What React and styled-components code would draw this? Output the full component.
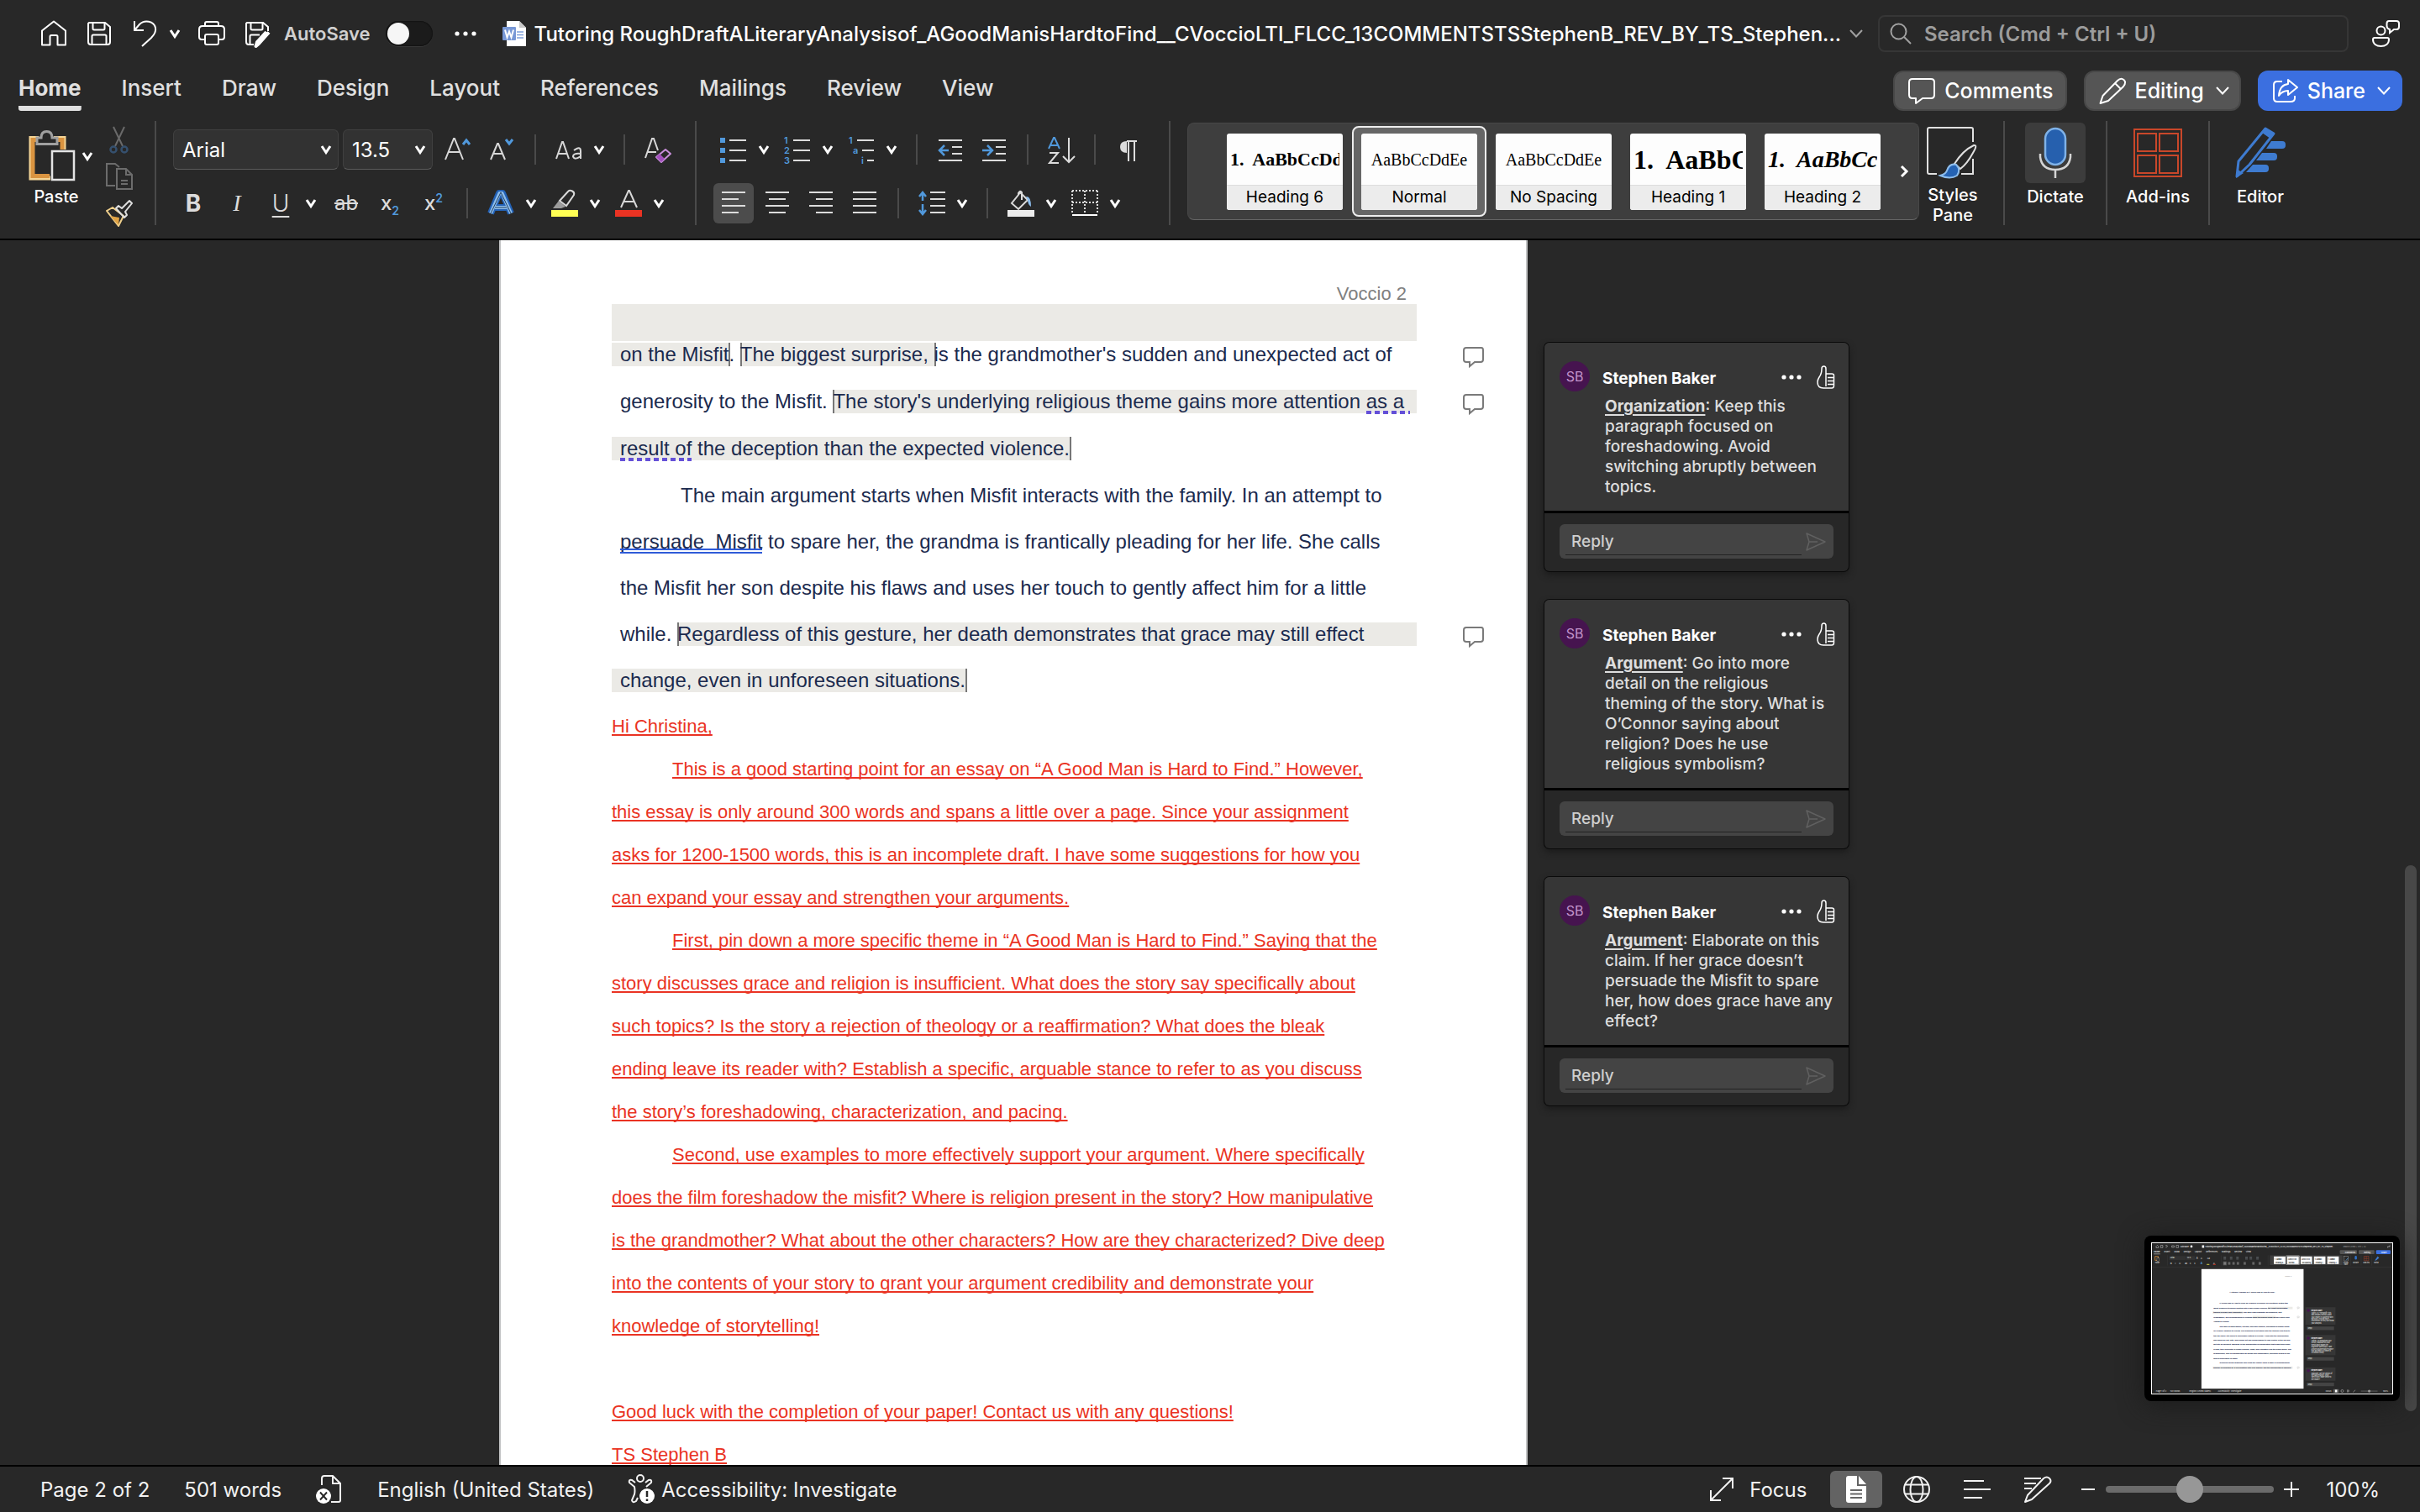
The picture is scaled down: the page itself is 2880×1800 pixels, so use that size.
import React from "react";
import styled, { createGlobalStyle, css } from "styled-components";

const UI = `Inter, "Liberation Sans", sans-serif`;
const ARIAL = `"Liberation Sans", Arial, sans-serif`;
const TIMES = `"Liberation Serif", "Times New Roman", serif`;

const GlobalStyle = createGlobalStyle`
  *, ::before, ::after { box-sizing: border-box; }
  body { margin: 0; background: #282828; font-family: ${UI}; color: #e0e0e0; }
  button, input, select { font: inherit; color: inherit; background: none; border: 0; padding: 0; margin: 0; outline: 0; }
  svg { display: block; flex: none; overflow: visible; }
`;

/* ---------- icons ---------- */

const Svg = ({ w, h, sw = 2, children, ...rest }) => (
  <svg width={w} height={h} viewBox={`0 0 ${w} ${h}`} fill="none" stroke="currentColor" strokeWidth={sw} aria-hidden="true" {...rest}>
    {children}
  </svg>
);

const BLUE = "#5199dc";
const Chevron = () => <Svg w={12} h={12} sw={3}><path d="M1 2 6 9.5 11 2" /></Svg>;
const ThinChevron = ({ color = "currentColor" }) => <Svg w={16} h={12} sw={2} stroke={color}><path d="M1 2 8 9.5 15 2" /></Svg>;

const HomeIcon = () => <Svg w={32} h={32}><path d="M2 12.5 16 1.5 30 12.5V29.500H20.500V19.500Q20.500 18 19 18H13Q11.500 18 11.500 19.500V29.500H2Z" strokeLinejoin="round" /></Svg>;
const SaveIcon = () => <Svg w={32} h={32}><path d="M4 3H23L29 8V26Q29 29 26 29H6Q3 29 3 26V4Z" strokeLinejoin="round" /><path d="M8.500 3V10Q8.500 11.500 10 11.500H21Q22.500 11.500 22.500 10V3M7.500 29V19Q7.500 17.500 9 17.500H23Q24.500 17.500 24.500 19V29" /></Svg>;
const UndoIcon = () => <Svg w={32} h={32}><path d="M4 1V12H15" /><path d="M4.500 11.500 10 5C16 -1 27 1 29 9C30 14 27 18 24 21L13 31" /></Svg>;
const PrintIcon = () => <Svg w={32} h={32}><path d="M8 7V4Q8 2 10 2H22Q24 2 24 4V7M8 23H4Q1 23 1 20V11Q1 7 5 7H27Q31 7 31 11V20Q31 23 28 23H24" /><rect x="8" y="17" width="16" height="12" rx="2" /></Svg>;
const SaveEditIcon = () => <Svg w={32} h={32}><path d="M29 13V8L23 3H4L3 4V26Q3 29 6 29H12" /><path d="M8.500 3V10Q8.500 11.500 10 11.500H21Q22.500 11.500 22.500 10V3M7.500 29V19Q7.500 17.500 9 17.500H19" /><path d="M30 14.500 18 28 14.500 31 16 26 27 14" strokeWidth="4" fill="currentColor" strokeLinejoin="round" /></Svg>;
const Dots = ({ w = 26 }) => <Svg w={w} h={8} stroke="none" fill="currentColor"><circle cx="3" cy="4" r="2.600" /><circle cx={w / 2} cy="4" r="2.600" /><circle cx={w - 3} cy="4" r="2.600" /></Svg>;
const WordDocIcon = () => (
  <Svg w={28} h={30} stroke="none">
    <path d="M5 0H20L28 8V30H5Z" fill="#fff" /><path d="M20 0 28 8H20Z" fill="#c9c9c9" />
    <path d="M17 13H25M17 16.500H25M17 20H25" stroke="#7fa0dc" strokeWidth="1.500" />
    <rect x="0" y="7" width="16" height="16" rx="1" fill="#7898d6" />
    <path d="M3 10.500 5.500 19.500 8 12.500 10.500 19.500 13 10.500" stroke="#fff" strokeWidth="2" />
  </Svg>
);
const SearchIcon = () => <Svg w={26} h={26}><circle cx="10.500" cy="10.500" r="9" /><path d="M17 17 25 25" /></Svg>;
const PresenceIcon = () => <Svg w={34} h={34}><circle cx="10.500" cy="13.500" r="5" /><path d="M3 22H18Q20 22 20 24C20 29 16 32 10.500 32S1 29 1 24Q1 22 3 22Z" /><path d="M20 2H29Q32 2 32 5V9Q32 12 29 12H26L21 16V12Q17.500 11 17.500 8V5Q17.500 2 20 2Z" /></Svg>;
const BubbleIcon = () => <Svg w={32} h={32}><path d="M5 2H27Q31 2 31 6V21Q31 25 27 25H17L9 31V25H5Q1 25 1 21V6Q1 2 5 2Z" strokeLinejoin="round" /></Svg>;
const PencilIcon = () => <Svg w={32} h={32}><path d="M22 4Q26 0 29.500 3T29 11L11 28 1.500 31 4.500 22ZM19 7 26 14" strokeLinejoin="round" /></Svg>;
const ShareIcon = () => <Svg w={30} h={30}><path d="M11 4H5Q1 4 1 8V24Q1 28 5 28H21Q26 28 26 24V21" /><path d="M18 2 29 11 18 20V15Q11 15 7 21Q8 8 18 7Z" strokeLinejoin="round" /></Svg>;

const PasteIcon = () => (
  <Svg w={56} h={64}>
    <path d="M12 10.500H3V58H26M30 10.500H42V24" stroke="#f5d596" strokeWidth="5" /><path d="M10 12.500H5V55.500H25M34 12.500H40V24" stroke="#da9440" strokeWidth="5" />
    <path d="M10 17.500V10H15Q15 2.500 21.500 2.500T28 10H34V17.500Z" fill="#282828" stroke="#a0a0a0" strokeWidth="3" />
    <rect x="28" y="26" width="26" height="34" fill="#282828" stroke="#e4e4e4" strokeWidth="2.500" />
  </Svg>
);
const CutIcon = () => <Svg w={32} h={32}><path d="M9 1 20 24M22 1 11 24" stroke="#6a6a6a" /><circle cx="9" cy="28" r="3.500" stroke="#35506e" strokeWidth="2.500" /><circle cx="22" cy="28" r="3.500" stroke="#35506e" strokeWidth="2.500" /></Svg>;
const CopyIcon = () => <Svg w={32} h={32} stroke="#6c6c6c"><path d="M11 27H1V1H11L16 5M13 7H24L31 14V31H13ZM24 7V14H31M18 21H26M18 25H26" /></Svg>;
const BrushIcon = () => <Svg w={32} h={32}><path d="M1 13 8 9 21 19 15 31Z" stroke="#f0d08c" strokeLinejoin="round" /><path d="M5 19 16 21 15 30Z" fill="#dfa244" stroke="none" /><path d="M12 10 15 7 19 10 28 1 31 4 23 14 25 18 22 21Z" stroke="#dedede" strokeLinejoin="round" /></Svg>;

const GrowIcon = () => <Svg w={32} h={32}><path d="M1 28 11 3H12L22 28M5 19H18" stroke="#d8d8d8" /><path d="M22 10 26 5 30 10" stroke={BLUE} strokeWidth="3" /></Svg>;
const ShrinkIcon = () => <Svg w={32} h={32}><path d="M3 28 11 9H12L20 28M6 21H17" stroke="#d8d8d8" /><path d="M21 4 25 9 29 4" stroke={BLUE} strokeWidth="3" /></Svg>;
const CaseIcon = () => <Svg w={32} h={32} stroke="#d8d8d8"><path d="M1 27 8 7H9L16 27M4 21H13M22 17Q30 11 30 18V27M30 21Q21 20 21 24.500Q23 29 30 24" /></Svg>;
const ClearIcon = () => <Svg w={32} h={32}><path d="M1 26 9 3H11L16 17M4 19H14" stroke="#d8d8d8" /><path d="M14 25 25 16 31 21 20 31Z" stroke="#c98fdb" strokeLinejoin="round" /><path d="M14 25 18 21 24 27 20 31Z" fill="#a24fbd" stroke="none" /></Svg>;
const EffectsIcon = () => <Svg w={32} h={32} strokeLinejoin="round"><path d="M4 28 14 4H18L28 28M9 21H23" stroke="#2361b5" strokeWidth="8" /><path d="M4 28 14.500 4H17.500L28 28M9 21H23" stroke="#8dbdec" strokeWidth="4" /><path d="M4 28 16 3 28 28M9 21H23" stroke="#24405f" strokeWidth="1" /></Svg>;
const MarkerIcon = () => <Svg w={32} h={32}><path d="M10 13 20 2Q22 0 25 1.500T27 6L18 19Z" stroke="#d8d8d8" /><path d="M9 13 17 20 12 22H2Z" fill="#9c9c9c" stroke="none" /><rect y="24" width="32" height="8" fill="#ffff54" stroke="none" /></Svg>;
const ColorIcon = () => <Svg w={32} h={32}><path d="M7 21 16 1H17L26 21M11 14H22" stroke="#d8d8d8" /><rect y="24" width="32" height="8" fill="#ea3323" stroke="none" /></Svg>;

const BulletsIcon = () => <Svg w={32} h={32}><path d="M11 5H31M11 17H31M11 29H31" stroke="#dcdcdc" /><path d="M0 2H6V8H0ZM0 14H6V20H0ZM0 26H6V32H0Z" fill={BLUE} stroke="none" /></Svg>;
const Digit = styled.text`font: 600 11px ${UI}; fill: ${BLUE}; stroke: none;`;
const NumbersIcon = () => <Svg w={32} h={32}><path d="M11 5H31M11 17H31M11 29H31" stroke="#dcdcdc" /><Digit x="0" y="9">1</Digit><Digit x="0" y="21">2</Digit><Digit x="0" y="33">3</Digit></Svg>;
const LevelsIcon = () => <Svg w={32} h={32}><path d="M11 5H31M17 17H31M23 29H31" stroke="#dcdcdc" /><Digit x="1" y="9">1</Digit><Digit x="6" y="21">a</Digit><Digit x="16" y="33">i</Digit></Svg>;
const DentIcon = ({ flip }) => <Svg w={32} h={32}><path d="M2 5H30M18 13H30M18 21H30M2 29H30" stroke="#dcdcdc" /><path d={flip ? "M2 17H13M8 11 14 17 8 23" : "M14 17H4M9 11 3 17 9 23"} stroke={BLUE} strokeWidth="2.500" /></Svg>;
const SortIcon = () => <Svg w={32} h={32}><path d="M1 15 7 2H8L14 15M3 11H12" stroke={BLUE} /><path d="M2 20H12L2 32H13M25 2V31M18 24 25 31 32 24" stroke="#dcdcdc" /></Svg>;
const PilcrowIcon = () => <Svg w={32} h={32}><path d="M26 6H14Q6 6 6 13T14 20V6" fill="#dcdcdc" stroke="none" /><path d="M26 6H14M16 6V30M23 6V30" stroke="#dcdcdc" /></Svg>;
const LINES = {
  left: "M2 3H30M2 11H22M2 19H30M2 27H22", center: "M2 3H30M6 11H26M2 19H30M6 27H26",
  right: "M2 3H30M10 11H30M2 19H30M10 27H30", justify: "M2 3H30M2 11H30M2 19H30M2 27H30",
};
const AlignIcon = ({ kind }) => <Svg w={32} h={32} stroke="#dcdcdc"><path d={LINES[kind]} /></Svg>;
const SpacingIcon = () => <Svg w={32} h={32}><path d="M14 3H32M14 11H32M14 19H32M14 27H32" stroke="#dcdcdc" /><path d="M5 13V3M1 8 5 3 9 8M5 17V29M1 24 5 29 9 24" stroke={BLUE} strokeWidth="2.500" /></Svg>;
const BucketIcon = () => <Svg w={32} h={32}><path d="M13 6 5 16 13 23 24 12 15 3ZM13 6V4Q15 0 17 3V12" stroke="#dcdcdc" /><path d="M22 8Q28 7 28 20Q24 17 24 12Z" fill="#8dbdec" stroke="none" /><rect y="24" width="32" height="8" fill="#ededed" stroke="none" /></Svg>;
const BordersIcon = () => <Svg w={32} h={32} stroke="#dcdcdc"><path d="M1 1H31M1 15H31M1 1V28M16 1V28M31 1V28" strokeDasharray="2 2" /><path d="M1 30H31" stroke="#fff" /></Svg>;

const StylesPaneIcon = () => <Svg w={64} h={64}><path d="M13 58H4Q2 58 2 56V5Q2 3 4 3H54Q56 3 56 5V20M56 40V58H42" stroke="#e0e0e0" /><path d="M34 46Q44 30 57 24Q62 23 56 33Q49 46 41 52Z" stroke="#e0e0e0" fill="#282828" /><path d="M17 60Q24 58 25 54Q28 45 36 47Q42 53 37 60Q29 65 17 60Z" fill="#2563b4" stroke="#8dbdec" /></Svg>;
const MicIcon = () => <Svg w={40} h={62}><rect x="8" y="2" width="24" height="43" rx="12" fill="#2660ae" stroke="#7fb2e8" strokeWidth="2.500" /><path d="M2 32V36Q4 51 20 51T38 36V32M20 51V61" stroke="#d4d4d4" strokeWidth="2.500" /></Svg>;
const AddInsIcon = () => <Svg w={58} h={60} stroke="#c9472a"><rect x="1" y="2" width="56" height="56" /><path d="M5 7H27V28H5ZM31 7H53V28H31ZM5 33H27V54H5ZM31 33H53V54H31Z" /></Svg>;
const EditorIcon = () => (
  <Svg w={62} h={64} stroke="#3e7bd0">
    <path d="M38 27H57Q61 27 61 23V22Q61 18 57 18H44ZM26 41H47Q51 41 51 37V36Q51 32 47 32H33ZM14 55H37Q41 55 41 51V50Q41 46 37 46H22Z" fill="#3e7bd0" stroke="none" />
    <path d="M37 3 47 9 18 46 3 60 5 42Z" fill="#282828" strokeWidth="3" strokeLinejoin="round" /><path d="M37 2 48 9 43 15 33 8ZM2 62 4 52 11 56Z" fill="#3e7bd0" stroke="none" />
  </Svg>
);

const NoteIcon = () => <Svg w={26} h={26} sw={2} stroke="#7a7a7a"><path d="M4 2H22Q24 2 24 5V16Q24 19 21 19H14L8 24V19H4Q1 19 1 16V5Q1 2 4 2Z" /></Svg>;
const ThumbIcon = () => <Svg w={22} h={28}><path d="M11 10V4Q11 1 8.500 1T6 4Q6 10 3 14Q1 17 1 20Q1 27 8 27H18Q20.500 27 20.500 24V12Q20.500 10 18 10H11V25" strokeWidth="1.500" /><path d="M13 14.500H21M13 18.500H21M13 22.500H21" strokeWidth="1.500" /></Svg>;
const SendIcon = () => <Svg w={26} h={24} sw={1.500} stroke="#606060"><path d="M2 2 24 12 2 22 5 12ZM5 12H15" strokeLinejoin="round" /></Svg>;

const ProofIcon = () => <Svg w={32} h={36}><path d="M7 13V5Q7 2 10 2H20L29 11V31Q29 33 27 33H18M20 2V11H29" /><circle cx="9" cy="26" r="9" fill="#fff" stroke="none" /><path d="M5 21.500 13 30.500M13 21.500 5 30.500" stroke="#282828" /></Svg>;
const AccessIcon = () => <Svg w={32} h={36}><circle cx="14" cy="5" r="4" /><path d="M8 10 4 7Q0 6 1 10L7 15Q8 20 7 24L4 31Q5 35 9 32L11 28M20 10 24 7Q28 6 27 10L21 15" /><circle cx="22" cy="26" r="9" fill="#fff" stroke="none" /><path d="M22 20V27M22 29.500V32" stroke="#282828" strokeWidth="2.500" /></Svg>;
const FocusIcon = () => <Svg w={30} h={30}><path d="M2 28 28 2M16 2H28V14M14 28H2V16" /></Svg>;
const PageIcon = () => <Svg w={24} h={32}><path d="M2 0H13V12H24V29Q24 32 21 32H3Q0 32 0 29V3Q0 0 3 0ZM15 0 24 10H15Z" fill="#fff" stroke="none" /><path d="M5 17H19M5 21.500H19M5 26H19" stroke="#666" /></Svg>;
const GlobeIcon = () => <Svg w={32} h={32}><circle cx="16" cy="16" r="15" /><ellipse cx="16" cy="16" rx="7.500" ry="15" /><path d="M2 10.500H30M2 21.500H30" /></Svg>;
const OutlineIcon = () => <Svg w={32} h={32}><path d="M0 6H24M0 16H32M0 26H22" /></Svg>;
const DraftIcon = () => <Svg w={32} h={32}><path d="M0 3H20M0 9H14M0 15H9" /><path d="M23 3Q27 0 30 3T30 9L9 28 1 31 4 23Z" strokeLinejoin="round" /></Svg>;

/* ---------- shell ---------- */

const Window = styled.div`
  position: relative;
  display: grid;
  grid-template-columns: minmax(0, 1fr);
  grid-template-rows: auto minmax(0, 1fr) auto;
  height: 100vh;
  overflow: hidden;
  background: #282828;
`;

const TopBar = styled.header`border-bottom: 2px solid #000;`;

const TitleRow = styled.div`
  display: flex;
  align-items: center;
  height: 80px;
  padding: 0 23px 0 48px;
  color: #fff;
`;

const Quick = styled.div`display: flex; align-items: center; gap: 22px;`;
const Pair = styled.div`display: flex; align-items: center; gap: 14px;`;
const Bare = styled.button`display: grid; place-items: center; flex: none;`;

const AutoSave = styled.label`
  display: flex;
  align-items: center;
  gap: 18px;
  margin: 0 26px 0 16px;
  font-size: 22px;
  font-weight: 600;
  color: #d0d0d0;
`;

const Toggle = styled.input`
  appearance: none;
  width: 56px;
  height: 30px;
  border-radius: 15px;
  background: #1b1b1b;
  box-shadow: inset 0 0 2px #000, 0 1px 0 #383838;
  &::before { content: ""; display: block; width: 26px; height: 26px; margin: 2px; border-radius: 50%; background: #f6f6f6; }
`;

const FileName = styled.button`
  display: flex;
  align-items: center;
  gap: 10px;
  min-width: 0;
  margin: 0 14px 0 31px;
  font-size: 24px;
  font-weight: 500;
  white-space: nowrap;
`;
const FileText = styled.span`overflow: hidden;`;

const SearchBox = styled.label`
  display: flex;
  align-items: center;
  gap: 15px;
  flex: none;
  width: 560px;
  height: 44px;
  margin: 0 28px 0 auto;
  padding: 0 12px;
  border: 2px solid #363636;
  border-radius: 8px;
  color: #a0a0a0;
  input { flex: 1; min-width: 0; font-size: 24px; font-weight: 600; }
  input::placeholder { color: #9c9c9c; opacity: 1; }
`;

const TabRow = styled.div`display: flex; align-items: center; height: 56px; padding: 0 21px 0 22px;`;
const Tabs = styled.nav`display: flex; gap: 48px; flex: 1;`;
const Tab = styled.button`
  height: 48px;
  padding-bottom: 6px;
  font-size: 26px;
  line-height: 42px;
  font-weight: ${(p) => (p.$on ? 700 : 500)};
  ${(p) => p.$on && css`background: linear-gradient(#e0e0e0, #e0e0e0) bottom / 100% 6px no-repeat; border-radius: 3px;`}
`;

const Actions = styled.div`display: flex; gap: 20px;`;
const Pill = styled.button`
  display: flex;
  align-items: center;
  gap: 11px;
  height: 48px;
  padding: 0 ${(p) => (p.$menu ? 12 : 14)}px 0 16px;
  border-radius: 12px;
  border: 2px solid ${(p) => (p.$primary ? "#3b6fe0" : "#484848")};
  background: ${(p) => (p.$primary ? "#3b6fe0" : "#555")};
  color: #fff;
  font-size: 25px;
  font-weight: 500;
  svg:last-child:not(:first-child) { margin-left: 3px; }
`;

/* ---------- ribbon ---------- */

const Ribbon = styled.div`
  display: flex;
  height: 148px;
  padding: 8px 0 16px 34px;
`;
const Divider = styled.div`
  flex: none;
  width: 2px;
  background: #4a4a4a;
  margin: 0 ${(p) => p.$after ?? 24}px 0 ${(p) => p.$before ?? 24}px;
`;
const Rows = styled.div`display: flex; flex-direction: column; gap: 16px; padding-top: 10px;`;
const Row = styled.div`display: flex; align-items: center; height: 48px; gap: 20px; padding-left: ${(p) => (p.$inset ? 8 : 0)}px;`;
const Cluster = styled.div`display: flex; align-items: center; gap: 18px;`;
const Fields = styled.div`display: flex; gap: 5px; margin-right: -6px;`;
const Rule = styled.div`width: 2px; height: 36px; margin: 0 3px; background: #4a4a4a;`;

const Tool = styled.button`
  display: grid;
  place-items: center;
  width: 48px;
  height: 48px;
  margin: 0 -8px;
  border-radius: 6px;
  color: #dcdcdc;
  background: ${(p) => (p.$on ? "#4c4c4c" : "transparent")};
`;
const SplitBox = styled.div`display: flex; align-items: center; gap: 14px; color: #fff;`;
const Split = ({ label, children }) => (
  <SplitBox><Tool aria-label={label}>{children}</Tool><Bare aria-label={`${label} options`}><Chevron /></Bare></SplitBox>
);

const Glyph = styled.span`
  display: inline-block;
  font-size: 28px;
  line-height: 32px;
  font-weight: ${(p) => (p.$bold ? 700 : 400)};
  font-style: ${(p) => (p.$italic ? "italic" : "normal")};
  font-family: ${(p) => (p.$italic ? TIMES : UI)};
  ${(p) => p.$under && css`font-weight: 300; text-decoration: underline; text-decoration-thickness: 2px; text-underline-offset: 5px;`}
  ${(p) => p.$strike && css`font-size: 24px; text-decoration: line-through; text-decoration-thickness: 2px;`}
`;
const Script = styled.span`
  font-size: 24px;
  line-height: 32px;
  font-weight: 500;
  sub, sup { font-size: 14px; font-weight: 600; color: ${BLUE}; line-height: 0; }
`;

const Field = styled.label`
  display: grid;
  grid-template-columns: 1fr 12px;
  align-items: center;
  width: ${(p) => p.$w}px;
  height: 48px;
  padding: 0 8px 0 10px;
  border: 1px solid #404040;
  border-bottom-color: #5a5a5a;
  border-radius: 6px;
  background: #323232;
  color: #fff;
  select { grid-area: 1 / 1 / 2 / 3; appearance: none; font-size: 24px; padding-right: 16px; }
  svg { grid-area: 1 / 2; pointer-events: none; }
`;

const PasteGroup = styled.div`display: flex; gap: 16px;`;
const PasteMain = styled.div`display: grid; grid-template-columns: 56px 12px; column-gap: 8px; row-gap: 4px; align-content: start; align-items: center; padding-top: 10px; color: #fff;`;
const Caption = styled.span`font-size: 20px; line-height: 24px; font-weight: 500; color: #fff; text-align: center; white-space: nowrap;`;
const PasteCaption = styled(Caption)`width: 66px;`;
const SmallTools = styled.div`display: flex; flex-direction: column; gap: 12px; padding-top: 6px;`;

const Gallery = styled.div`
  display: flex;
  flex: none;
  height: 116px;
  margin-top: 2px;
  padding: 3px 0 3px 35px;
  border: 1px solid #474747;
  border-bottom-color: #666;
  border-radius: 8px;
  background: #3e3e3e;
`;
const StyleItem = styled.button`
  width: 160px;
  height: 108px;
  padding: 7px 9px 6px;
  border: 2px solid ${(p) => (p.$on ? "#ededed" : "transparent")};
  border-radius: 8px;
  background: ${(p) => (p.$on ? "#666" : "transparent")};
`;
const StyleCard = styled.span`
  display: grid;
  grid-template-rows: 61px 30px;
  border-radius: 3px;
  overflow: hidden;
  background: #fdfdfd;
  color: #000;
`;
const Sample = styled.span`
  overflow: hidden;
  margin: 0 4px;
  font-family: ${TIMES};
  font-size: ${(p) => p.$size}px;
  line-height: 62px;
  font-weight: ${(p) => (p.$bold ? 700 : 400)};
  font-style: ${(p) => (p.$italic ? "italic" : "normal")};
  text-align: ${(p) => (p.$bold ? "left" : "center")};
  white-space: pre;
`;
const StyleName = styled.span`background: #ececec; border-top: 1px solid #ddd; font-size: 19px; line-height: 27px;`;
const GalleryNext = styled(Bare)`width: 34px;`;

const Big = styled.button`
  display: flex;
  flex-direction: column;
  align-items: center;
  gap: 4px;
  flex: none;
  width: 72px;
  padding-top: 2px;
  margin-left: ${(p) => (p.$first ? 4 : 0)}px;
`;
const BigIcon = styled.span`
  display: grid;
  place-items: center;
  width: 72px;
  height: 72px;
  border-radius: 6px;
  background: ${(p) => (p.$on ? "#3c3c3c" : "transparent")};
`;

const STYLES = [
  { name: "Heading 6", sample: "1.  AaBbCcDdEe", size: 22, bold: true },
  { name: "Normal", sample: "AaBbCcDdEe", size: 20, on: true },
  { name: "No Spacing", sample: "AaBbCcDdEe", size: 20 },
  { name: "Heading 1", sample: "1.  AaBbCcDdEe", size: 32, bold: true },
  { name: "Heading 2", sample: "1.  AaBbCcDdEe", size: 28, bold: true, italic: true },
];
const TABS = ["Home", "Insert", "Draw", "Design", "Layout", "References", "Mailings", "Review", "View"];
const FILE = "Tutoring RoughDraftALiteraryAnalysisof_AGoodManisHardtoFind__CVoccioLTI_FLCC_13COMMENTSTSStephenB_REV_BY_TS_Stephen...";

/* ---------- document ---------- */

const Workspace = styled.main`display: flex; min-height: 0; overflow: hidden;`;
const Canvas = styled.div`display: flex; justify-content: center; flex: 1; min-width: 0;`;
const Page = styled.article`
  flex: none;
  width: 1224px;
  padding: 52px 0 0 132px;
  border: solid #c2c3c4;
  border-width: 0 2px;
  background: #fff;
  font-family: ${ARIAL};
`;
const PageHeader = styled.div`width: 946px; font-size: 22px; line-height: 24px; color: #808080; text-align: right;`;
const Shade = styled.div`width: 958px; height: 44px; margin-bottom: -12px; background: #ebeae6;`;
const Draft = styled.div`margin-left: 10px; color: #1b2a4e; font-size: 24px;`;
const Line = styled.div`
  display: flex;
  align-items: center;
  gap: 55px;
  height: ${(p) => p.$lh ?? 56}px;
  line-height: ${(p) => p.$lh ?? 56}px;
  white-space: pre;
`;
const LineText = styled.div`display: flex; align-items: center; width: 948px; padding-left: ${(p) => (p.$indent ? 72 : 0)}px;`;
const Mark = styled.span`
  height: 28px;
  line-height: 28px;
  background: #ebeae6;
  ${(p) => p.$start && css`margin-left: -10px; padding-left: 10px;`}
  ${(p) => p.$fill && css`flex: 1;`}
  box-shadow: ${(p) => [p.$open && "inset 2px 0 0 #777", p.$close && "2px 0 0 #777"].filter(Boolean).join(", ") || "none"};
`;
const Refine = styled.span`
  position: relative;
  &::after { content: ""; position: absolute; left: 0; right: 0; bottom: -2px; height: 4px;
    background: repeating-linear-gradient(90deg, #6450d8 0 6px, transparent 6px 10px); }
`;
const Grammar = styled.span`
  position: relative;
  line-height: 28px;
  &::after { content: ""; position: absolute; left: 0; right: 0; bottom: 0; height: 6px; border: solid #2f5bd8; border-width: 2px 0; }
`;
const Note = styled(Bare)`padding-top: 6px;`;
const NoteButton = () => <Note aria-label="Show comment"><NoteIcon /></Note>;

const Letter = styled.div`
  margin-top: 2px;
  font-size: 22px;
  line-height: 51px;
  color: #ea3323;
  white-space: pre;
  text-decoration: underline;
  text-decoration-thickness: 2px;
  text-underline-offset: 2px;
  text-decoration-skip-ink: none;
`;
const Para = styled.p`margin: 0; min-height: 51px; text-indent: ${(p) => (p.$indent ? 72 : 0)}px;`;

const LETTER = [
  { lines: ["Hi Christina,"] },
  { indent: true, lines: ["This is a good starting point for an essay on “A Good Man is Hard to Find.” However,", "this essay is only around 300 words and spans a little over a page. Since your assignment", "asks for 1200-1500 words, this is an incomplete draft. I have some suggestions for how you", "can expand your essay and strengthen your arguments."] },
  { indent: true, lines: ["First, pin down a more specific theme in “A Good Man is Hard to Find.” Saying that the", "story discusses grace and religion is insufficient. What does the story say specifically about", "such topics? Is the story a rejection of theology or a reaffirmation? What does the bleak", "ending leave its reader with? Establish a specific, arguable stance to refer to as you discuss", "the story’s foreshadowing, characterization, and pacing."] },
  { indent: true, lines: ["Second, use examples to more effectively support your argument. Where specifically", "does the film foreshadow the misfit? Where is religion present in the story? How manipulative", "is the grandmother? What about the other characters? How are they characterized? Dive deep", "into the contents of your story to grant your argument credibility and demonstrate your", "knowledge of storytelling!"] },
  { lines: [] },
  { lines: ["Good luck with the completion of your paper! Contact us with any questions!"] },
  { lines: ["TS Stephen B"] },
];

/* ---------- comments ---------- */

const CommentPane = styled.aside`
  display: flex;
  flex-direction: column;
  gap: 34px;
  flex: none;
  width: 450px;
  padding: 122px 68px 0 20px;
`;
const Card = styled.section`border-radius: 6px; background: #272727; box-shadow: 0 0 0 1px #0a0a0a, 0 4px 8px #1a1a1a; overflow: hidden;`;
const CardBody = styled.div`padding: 22px 16px 16px 18px; background: #363636;`;
const CardHead = styled.div`display: flex; align-items: center; height: 36px; margin-bottom: 6px; color: #fff;`;
const Avatar = styled.span`display: grid; place-items: center; width: 36px; height: 36px; margin-right: 15px; border-radius: 50%; background: #46144f; color: #c193cb; font-size: 16px;`;
const Author = styled.span`flex: 1; font-size: 19px; font-weight: 700; padding-top: 4px;`;
const CardTools = styled.div`display: flex; align-items: center; gap: 18px; padding-top: 2px;`;
const Message = styled.p`
  margin: 0 0 0 54px;
  font-size: 19px;
  line-height: 24px;
  font-weight: 500;
  white-space: pre;
  color: #dedede;
  b { font-weight: 700; text-decoration: underline; text-decoration-thickness: 2px; text-underline-offset: 3px; }
`;
const ReplyRow = styled.div`padding: 13px 18px 15px; border-top: 3px solid #000;`;
const ReplyBox = styled.label`
  display: flex;
  align-items: center;
  gap: 4px;
  height: 41px;
  padding: 0 8px 0 7px;
  border-radius: 6px;
  background: #444;
  input { flex: 1; min-width: 0; height: 32px; padding-left: 7px; border-bottom: 1px solid #222; font-size: 19px; font-weight: 500; }
  input::placeholder { color: #cfcfcf; opacity: 1; }
`;

const COMMENTS = [
  { tag: "Organization", text: ": Keep this\nparagraph focused on\nforeshadowing. Avoid\nswitching abruptly between\ntopics." },
  { tag: "Argument", text: ": Go into more\ndetail on the religious\ntheming of the story. What is\nO’Connor saying about\nreligion? Does he use\nreligious symbolism?" },
  { tag: "Argument", text: ": Elaborate on this\nclaim. If her grace doesn’t\npersuade the Misfit to spare\nher, how does grace have any\neffect?" },
];

const ScrollTrack = styled.div`display: flex; align-items: flex-end; flex: none; width: 18px; padding-bottom: 64px;`;
const ScrollThumb = styled.div`width: 14px; height: 650px; border-radius: 7px; background: #484848;`;

/* ---------- status bar ---------- */

const StatusBar = styled.footer`
  display: flex;
  align-items: center;
  justify-content: space-between;
  height: 56px;
  padding: 0 48px;
  border-top: 2px solid #000;
  color: #f2f2f2;
  font-size: 24px;
`;
const StatusSide = styled.div`display: flex; align-items: center; gap: ${(p) => p.$gap}px;`;
const StatusButton = styled.button`display: flex; align-items: center; gap: ${(p) => p.$gap ?? 7}px; white-space: nowrap;`;
const Views = styled.div`display: flex; align-items: center; gap: 10px;`;
const View = styled(Bare)`width: 62px; height: 44px; border-radius: 6px; background: ${(p) => (p.$on ? "#636363" : "transparent")};`;
const ZoomBox = styled.div`display: flex; align-items: center; gap: 12px;`;
const Slider = styled.input`
  appearance: none;
  width: 200px;
  height: 32px;
  &::-webkit-slider-runnable-track { height: 8px; border-radius: 4px; background: #6b6b6b; }
  &::-webkit-slider-thumb { appearance: none; width: 32px; height: 32px; margin-top: -12px; border-radius: 50%; background: #979797; }
`;
const Percent = styled.span`margin-left: 20px;`;

/* ---------- floating preview ---------- */

const Preview = styled.figure`
  position: absolute;
  right: 24px;
  bottom: 132px;
  width: 304px;
  margin: 0;
  padding: 8px;
  border-radius: 8px;
  background: #000;
  box-shadow: 0 4px 30px #1c1c1c;
  svg { width: 100%; height: auto; border: 1px solid #fff; overflow: hidden; }
`;
const DocText = styled.text`font: 24px ${ARIAL}; fill: #1b2a4e; stroke: #1b2a4e; stroke-width: 1px;`;
const UiText = styled.text`font: ${(p) => p.$w ?? 500} ${(p) => p.$s ?? 24}px ${UI}; fill: ${(p) => p.$c ?? "#e0e0e0"};`;

const P_LINES = [
  [1, "“A Good Man is Hard to Find” by Flannery O’Connor is a Southern Gothic tale"],
  [0, "about a family’s terrifying meeting with a well-known criminal, the Misfit incorporates"],
  [0, "themes of grace and redemption. The story uses character development, plot"],
  [0, "organization, and foreshadowing to express deep theological ideas as they travel from"],
  [0, "Atlanta to Florida."],
  [1, "The story is about Bailey, his wife, their two children, and Bailey’s mother going"],
  [0, "on a family vacation to Florida. The grandma is not happy with the itinerary and tries to"],
  [0, "talk the family into going to Tennessee instead of Florida. Along with the grandmother,"],
  [0, "she hides her cat, Pitty, who jumps out and causes Bailey to lose control of the car and"],
  [0, "get into an accident. Because of the grandmother’s manipulation that leads them down"],
  [0, "a road, they encounter a known criminal, Misfit, who ultimately kills the entire family. The"],
  [0, "grandmother, who is characterized as selfish and manipulative, becomes central to the"],
  [0, "story’s exploration of grace."],
  [1, "O’Connor builds suspense and holds the reader using a dash of foreshadowing."],
  [0, "Danger is predicted by a conversation with Red Sammy and the grandmother’s warning"],
];
const P_CARDS = [
  [767, 210, ["Clarity: Is “The Misfit” this", "well-known criminal; place", "your reader in suspense with", "the story. Provide more", "information so they can follow", "your analysis."]],
  [1100, 243, ["Thesis: To strengthen your", "thesis, elaborate on your", "thesis what makes the", "argument specifically. Take", "a more argumentative stance", "that will lead to a theme in", "O’Connor’s story."]],
  [1490, 160, ["Elaborate: Get the details of", "the conversation. What", "specifically made sense to", "the reader?"]],
];
const P_TABS = [[22, "Home"], [145, "Insert"], [267, "Draw"], [379, "Design"], [513, "Layout"], [647, "References"], [837, "Mailings"], [989, "Review"], [1125, "View"]];

const PreviewShot = () => (
  <svg viewBox="0 0 2880 1800" role="img" aria-label="Page 1 preview">
    <rect width="2880" height="1800" fill="#282828" />
    <path d="M50 55V38L64 24 78 38V55ZM104 26H130V54H104ZM160 30Q190 20 186 40L166 55M238 30H266V50H238ZM291 26H318V54H291Z" fill="none" stroke="#fff" strokeWidth="4" />
    <UiText x="339" y="48" $w={600} $s={22}>AutoSave</UiText><circle cx="473" cy="40" r="14" fill="#fff" />
    <rect x="600" y="25" width="26" height="30" fill="#fff" />
    <UiText x="637" y="49" $c="#fff">{FILE}</UiText>
    <UiText x="2290" y="49" $c="#9c9c9c">Search (Cmd + Ctrl + U)</UiText>
    <path d="M2826 54V40H2850V26" stroke="#fff" strokeWidth="5" fill="none" />
    {P_TABS.map(([x, t], i) => <UiText key={t} x={x} y="115" $s={26} $w={i ? 500 : 700}>{t}</UiText>)}
    <path d="M22 129H98" stroke="#e0e0e0" strokeWidth="6" />
    <rect x="2252" y="84" width="205" height="48" rx="10" fill="#555" /><rect x="2478" y="84" width="188" height="48" rx="10" fill="#555" /><rect x="2686" y="84" width="173" height="48" rx="10" fill="#3b6fe0" />
    <UiText x="2313" y="117" $c="#fff">Comments</UiText><UiText x="2539" y="117" $c="#fff">Editing</UiText><UiText x="2747" y="117" $c="#fff">Share</UiText>
    <path d="M37 158H75V205H37Z" fill="none" stroke="#da9440" strokeWidth="8" /><rect x="60" y="178" width="26" height="36" fill="#282828" stroke="#e4e4e4" strokeWidth="3" />
    <UiText x="38" y="242" $s={20}>Paste</UiText>
    <rect x="206" y="154" width="197" height="48" fill="#323232" /><rect x="408" y="154" width="107" height="48" fill="#323232" />
    <UiText x="218" y="186">Arial</UiText><UiText x="420" y="186">13.5</UiText><UiText x="530" y="188" $s={28}>A</UiText><UiText x="585" y="188">A</UiText><UiText x="663" y="188">Aa</UiText>
    <UiText x="222" y="250" $w={700}>B</UiText><UiText x="277" y="250">I</UiText><UiText x="324" y="250">U</UiText><UiText x="394" y="250">ab</UiText><UiText x="454" y="250">x</UiText><UiText x="507" y="250">x</UiText>
    <UiText x="582" y="254" $s={32} $w={700} $c="#5199dc">A</UiText><rect x="656" y="250" width="32" height="8" fill="#ffff54" /><rect x="732" y="250" width="32" height="8" fill="#ea3323" /><UiText x="736" y="248">A</UiText>
    {[858, 934, 1010, 1118, 1170, 1250].map((x) => <path key={x} d={`M${x} 167h30m-30 12h30m-30 12h30`} stroke="#b8c4d0" strokeWidth="3" />)}
    <rect x="850" y="218" width="48" height="48" fill="#4c4c4c" />
    {[860, 912, 964, 1016, 1098, 1202, 1278].map((x) => <path key={x} d={`M${x} 229h28m-28 9h28m-28 8h28m-28 8h28`} stroke="#dcdcdc" strokeWidth="3" />)}
    <path d="M185 144V268M829 144V268M1392 144V268M2383 144V268M2507 144V268M2635 144V268M0 285H2880" stroke="#4a4a4a" strokeWidth="3" />
    <rect x="1414" y="146" width="871" height="116" fill="#3e3e3e" /><rect x="1610" y="150" width="160" height="108" fill="#666" stroke="#eee" strokeWidth="3" />
    {STYLES.map((s, i) => (
      <g key={s.name}>
        <rect x={1461 + i * 160} y="159" width="138" height="91" fill="#fff" />
        <UiText x={1470 + i * 160} y="200" $s={20} $w={s.bold ? 700 : 400} $c="#000">{s.bold ? "1. AaBbC" : "AaBbCcDd"}</UiText>
        <UiText x={1480 + i * 160} y="242" $s={19} $c="#000">{s.name}</UiText>
      </g>
    ))}
    <rect x="2298" y="156" width="56" height="56" fill="none" stroke="#e0e0e0" strokeWidth="3" /><path d="M2326 206 2352 176" stroke="#5199dc" strokeWidth="8" />
    <rect x="2430" y="152" width="26" height="44" rx="13" fill="#2f6fc4" /><path d="M2541 156H2597V210H2541ZM2569 156V210M2541 183H2597" stroke="#c9472a" strokeWidth="4" fill="none" /><path d="M2670 210 2705 156 2722 175 2690 205Z" fill="#3e7bd0" />
    <UiText x="2294" y="242" $s={20}>Styles</UiText><UiText x="2300" y="266" $s={20}>Pane</UiText><UiText x="2408" y="242" $s={20}>Dictate</UiText><UiText x="2531" y="242" $s={20}>Add-ins</UiText><UiText x="2662" y="242" $s={20}>Editor</UiText>
    <rect x="593" y="310" width="1224" height="1434" fill="#fff" />
    <text x="1590" y="404" fontSize="22" fontFamily="Liberation Sans, sans-serif" fill="#808080">Voccio 1</text>
    <DocText x="930" y="594">A Literary Analysis of “A Good Man is Hard to Find”</DocText>
    <path d="M1390 762H1686V790H1390ZM728 817H1090V845H728ZM1205 872H1480V900H1205ZM728 1478H1686V1506H728Z" fill="#ebeae6" />
    {P_LINES.map(([indent, t], i) => <DocText key={t} x={738 + indent * 72} y={728 + i * 55}>{t}</DocText>)}
    {[765, 876, 1482].map((y) => <path key={y} d={`M1742 ${y}h22v17h-10l-5 5v-5h-7z`} fill="none" stroke="#7a7a7a" strokeWidth="2" />)}
    {P_CARDS.map(([y, h, lines]) => (
      <g key={y}>
        <rect x="1838" y={y} width="362" height={h} fill="#363636" />
        <rect x="1856" y={y + h + 22} width="326" height="42" fill="#444" />
        <circle cx="1874" cy={y + 38} r="18" fill="#46144f" />
        <UiText x="1907" y={y + 44} $s={19} $w={700} $c="#fff">Stephen Baker</UiText>
        <UiText x="1870" y={y + h + 50} $s={19}>Reply</UiText>
        {lines.map((t, i) => <UiText key={t} x="1910" y={y + 78 + i * 24} $s={19}>{t}</UiText>)}
      </g>
    ))}
    <UiText x="49" y="1781" $w={400}>Page 1 of 2</UiText><UiText x="219" y="1781" $w={400}>501 words</UiText><UiText x="449" y="1781" $w={400}>English (United States)</UiText><UiText x="791" y="1781" $w={400}>Accessibility: Investigate</UiText>
    <UiText x="2082" y="1781" $w={400}>Focus</UiText><rect x="2176" y="1750" width="62" height="44" fill="#636363" /><rect x="2195" y="1757" width="24" height="30" fill="#fff" />
    <circle cx="2280" cy="1772" r="15" fill="none" stroke="#fff" strokeWidth="4" /><path d="M2336 1762h24m-24 10h32m-32 10h22M2410 1786 2438 1760" stroke="#fff" strokeWidth="4" />
    <path d="M2504 1773H2704" stroke="#6b6b6b" strokeWidth="8" /><circle cx="2604" cy="1773" r="16" fill="#979797" /><UiText x="2768" y="1781" $w={400}>100%</UiText>
  </svg>
);

/* ---------- page parts ---------- */

const Title = () => (
  <TitleRow>
    <Quick>
      <Bare aria-label="Home"><HomeIcon /></Bare>
      <Bare aria-label="Save"><SaveIcon /></Bare>
      <Pair><Bare aria-label="Undo"><UndoIcon /></Bare><Bare aria-label="Undo history"><Chevron /></Bare></Pair>
      <Bare aria-label="Print"><PrintIcon /></Bare>
      <Bare aria-label="Save as"><SaveEditIcon /></Bare>
    </Quick>
    <AutoSave>AutoSave<Toggle type="checkbox" role="switch" /></AutoSave>
    <Bare aria-label="More"><Dots /></Bare>
    <FileName><WordDocIcon /><FileText>{FILE}</FileText><ThinChevron color="#a0a0a0" /></FileName>
    <SearchBox><SearchIcon /><input type="search" aria-label="Search" placeholder="Search (Cmd + Ctrl + U)" /></SearchBox>
    <Bare aria-label="Presence"><PresenceIcon /></Bare>
  </TitleRow>
);

const RibbonTabs = () => (
  <TabRow>
    <Tabs>{TABS.map((t, i) => <Tab key={t} $on={i === 0}>{t}</Tab>)}</Tabs>
    <Actions>
      <Pill><BubbleIcon />Comments</Pill>
      <Pill $menu><PencilIcon />Editing<ThinChevron /></Pill>
      <Pill $menu $primary><ShareIcon />Share<ThinChevron /></Pill>
    </Actions>
  </TabRow>
);

const RibbonTools = () => (
  <Ribbon>
    <PasteGroup>
      <PasteMain>
        <Bare aria-label="Paste"><PasteIcon /></Bare><Bare aria-label="Paste options"><Chevron /></Bare>
        <PasteCaption>Paste</PasteCaption>
      </PasteMain>
      <SmallTools>
        <Bare aria-label="Cut"><CutIcon /></Bare><Bare aria-label="Copy"><CopyIcon /></Bare><Bare aria-label="Format painter"><BrushIcon /></Bare>
      </SmallTools>
    </PasteGroup>
    <Divider $before={26} $after={20} />
    <Rows>
      <Row>
        <Fields>
          <Field $w={197}><select aria-label="Font"><option>Arial</option></select><Chevron /></Field>
          <Field $w={107}><select aria-label="Font size"><option>13.5</option></select><Chevron /></Field>
        </Fields>
        <Tool aria-label="Increase font size"><GrowIcon /></Tool>
        <Tool aria-label="Decrease font size"><ShrinkIcon /></Tool>
        <Rule />
        <Split label="Change case"><CaseIcon /></Split>
        <Rule />
        <Tool aria-label="Clear formatting"><ClearIcon /></Tool>
      </Row>
      <Row $inset>
        <Tool aria-label="Bold"><Glyph $bold>B</Glyph></Tool>
        <Tool aria-label="Italic"><Glyph $italic>I</Glyph></Tool>
        <Split label="Underline"><Glyph $under>U</Glyph></Split>
        <Tool aria-label="Strikethrough"><Glyph $strike>ab</Glyph></Tool>
        <Tool aria-label="Subscript"><Script>x<sub>2</sub></Script></Tool>
        <Tool aria-label="Superscript"><Script>x<sup>2</sup></Script></Tool>
        <Rule />
        <Cluster>
          <Split label="Text effects"><EffectsIcon /></Split>
          <Split label="Highlight"><MarkerIcon /></Split>
          <Split label="Font color"><ColorIcon /></Split>
        </Cluster>
      </Row>
    </Rows>
    <Divider $before={28} $after={28} />
    <Rows>
      <Row>
        <Cluster>
          <Split label="Bullets"><BulletsIcon /></Split>
          <Split label="Numbering"><NumbersIcon /></Split>
          <Split label="Multilevel list"><LevelsIcon /></Split>
        </Cluster>
        <Rule />
        <Tool aria-label="Decrease indent"><DentIcon /></Tool>
        <Tool aria-label="Increase indent"><DentIcon flip /></Tool>
        <Rule />
        <Tool aria-label="Sort"><SortIcon /></Tool>
        <Rule />
        <Tool aria-label="Show paragraph marks"><PilcrowIcon /></Tool>
      </Row>
      <Row>
        <Tool $on aria-label="Align left"><AlignIcon kind="left" /></Tool>
        <Tool aria-label="Center"><AlignIcon kind="center" /></Tool>
        <Tool aria-label="Align right"><AlignIcon kind="right" /></Tool>
        <Tool aria-label="Justify"><AlignIcon kind="justify" /></Tool>
        <Rule />
        <Split label="Line spacing"><SpacingIcon /></Split>
        <Rule />
        <Cluster>
          <Split label="Shading"><BucketIcon /></Split>
          <Split label="Borders"><BordersIcon /></Split>
        </Cluster>
      </Row>
    </Rows>
    <Divider $before={32} $after={20} />
    <Gallery>
      {STYLES.map((s) => (
        <StyleItem key={s.name} $on={s.on}>
          <StyleCard>
            <Sample $size={s.size} $bold={s.bold} $italic={s.italic}>{s.sample}</Sample>
            <StyleName>{s.name}</StyleName>
          </StyleCard>
        </StyleItem>
      ))}
      <GalleryNext aria-label="More styles"><Svg w={12} h={14} sw={3} stroke="#fff"><path d="M3 1 9 7 3 13" /></Svg></GalleryNext>
    </Gallery>
    <Big $first><BigIcon><StylesPaneIcon /></BigIcon><Caption>Styles<br />Pane</Caption></Big>
    <Divider />
    <Big><BigIcon $on><MicIcon /></BigIcon><Caption>Dictate</Caption></Big>
    <Divider />
    <Big><BigIcon><AddInsIcon /></BigIcon><Caption>Add-ins</Caption></Big>
    <Divider />
    <Big><BigIcon><EditorIcon /></BigIcon><Caption>Editor</Caption></Big>
  </Ribbon>
);

const Document = () => (
  <Page>
    <PageHeader>Voccio 2</PageHeader>
    <Shade />
    <Draft>
      <Line>
        <LineText><Mark $start $close>on the Misfit</Mark>. <Mark $open $close>The biggest surprise, </Mark>is the grandmother's sudden and unexpected act of</LineText>
        <NoteButton />
      </Line>
      <Line>
        <LineText>generosity to the Misfit. <Mark $open $fill>The story's underlying religious theme gains more attention <Refine>as a </Refine></Mark></LineText>
        <NoteButton />
      </Line>
      <Line><LineText><Mark $start $close><Refine>result of</Refine> the deception than the expected violence.</Mark></LineText></Line>
      <Line $lh={55}><LineText $indent>The main argument starts when Misfit interacts with the family. In an attempt to</LineText></Line>
      <Line $lh={55}><LineText><Grammar>persuade  Misfit</Grammar> to spare her, the grandma is frantically pleading for her life. She calls</LineText></Line>
      <Line $lh={55}><LineText>the Misfit her son despite his flaws and uses her touch to gently affect him for a little</LineText></Line>
      <Line $lh={55}>
        <LineText>while. <Mark $open $fill>Regardless of this gesture, her death demonstrates that grace may still effect</Mark></LineText>
        <NoteButton />
      </Line>
      <Line $lh={55}><LineText><Mark $start $close>change, even in unforeseen situations.</Mark></LineText></Line>
    </Draft>
    <Letter>
      {LETTER.map((p, i) => <Para key={i} $indent={p.indent}>{p.lines.join("\n")}</Para>)}
    </Letter>
  </Page>
);

const CommentCard = ({ tag, text }) => (
  <Card>
    <CardBody>
      <CardHead>
        <Avatar>SB</Avatar>
        <Author>Stephen Baker</Author>
        <CardTools><Bare aria-label="More actions"><Dots w={24} /></Bare><Bare aria-label="Like"><ThumbIcon /></Bare></CardTools>
      </CardHead>
      <Message><b>{tag}</b>{text}</Message>
    </CardBody>
    <ReplyRow>
      <ReplyBox><input aria-label="Reply" placeholder="Reply" /><Bare aria-label="Send"><SendIcon /></Bare></ReplyBox>
    </ReplyRow>
  </Card>
);

const Status = () => (
  <StatusBar>
    <StatusSide $gap={41}>
      <StatusButton>Page 2 of 2</StatusButton>
      <StatusButton>501 words</StatusButton>
      <Bare aria-label="Proofing errors"><ProofIcon /></Bare>
      <StatusButton>English (United States)</StatusButton>
      <StatusButton><AccessIcon />Accessibility: Investigate</StatusButton>
    </StatusSide>
    <StatusSide $gap={20}>
      <StatusSide $gap={28}>
        <StatusButton $gap={18}><FocusIcon />Focus</StatusButton>
        <Views>
          <View $on aria-label="Print layout"><PageIcon /></View>
          <View aria-label="Web layout"><GlobeIcon /></View>
          <View aria-label="Outline"><OutlineIcon /></View>
          <View aria-label="Draft"><DraftIcon /></View>
        </Views>
      </StatusSide>
      <ZoomBox>
        <Bare aria-label="Zoom out"><Svg w={18} h={18}><path d="M1 9H17" /></Svg></Bare>
        <Slider type="range" aria-label="Zoom" min="0" max="100" defaultValue="50" />
        <Bare aria-label="Zoom in"><Svg w={18} h={18}><path d="M0 9H18M9 0V18" /></Svg></Bare>
        <Percent>100%</Percent>
      </ZoomBox>
    </StatusSide>
  </StatusBar>
);

export default function App() {
  return (
    <Window>
      <GlobalStyle />
      <TopBar><Title /><RibbonTabs /><RibbonTools /></TopBar>
      <Workspace>
        <Canvas>
          <Document />
          <CommentPane>{COMMENTS.map((c, i) => <CommentCard key={i} {...c} />)}</CommentPane>
        </Canvas>
        <ScrollTrack><ScrollThumb /></ScrollTrack>
      </Workspace>
      <Status />
      <Preview><PreviewShot /></Preview>
    </Window>
  );
}
